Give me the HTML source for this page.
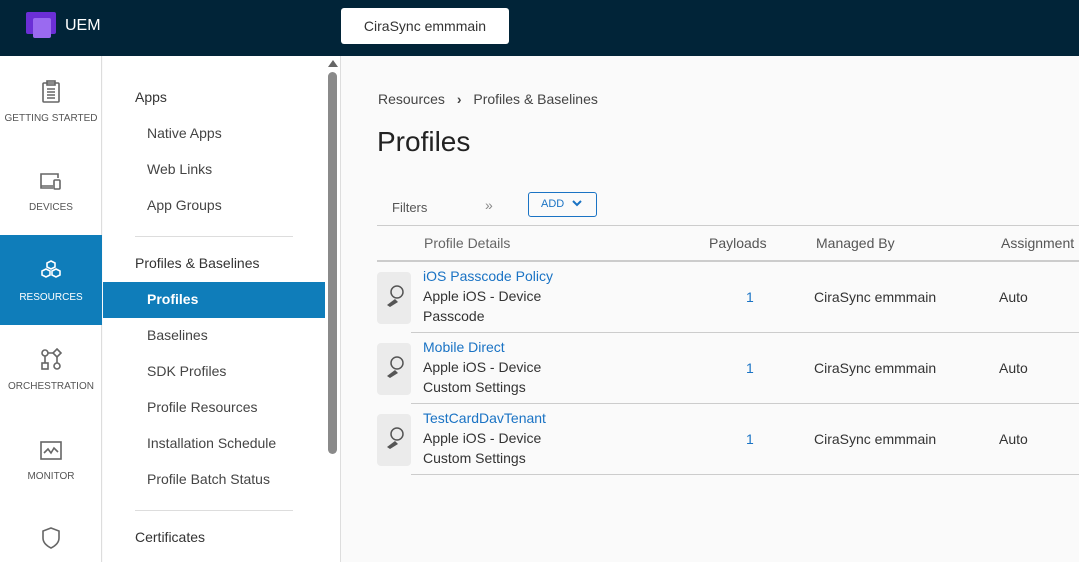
<!DOCTYPE html>
<html><head><meta charset="utf-8"><style>
*{margin:0;padding:0;box-sizing:border-box}
html,body{width:1079px;height:562px;overflow:hidden}
body{font-family:"Liberation Sans",sans-serif;background:#fafafa;position:relative;color:#333}
.top{position:absolute;left:0;top:0;width:1079px;height:56px;background:#012438}
.logo{position:absolute;left:26px;top:12px;width:30px;height:28px}
.uem{position:absolute;left:65px;top:17px;color:#fff;font-size:16px}
.org{position:absolute;left:341px;top:8px;width:168px;height:36px;background:#fff;border-radius:3px;font-size:14px;line-height:36px;text-align:center;color:#333}
.nav{position:absolute;left:0;top:56px;width:102px;height:506px;background:#fff;border-right:1px solid #ddd}
.ni{position:absolute;left:0;width:102px;text-align:center;font-size:10px;color:#555}
.ni svg{display:block;margin:0 auto 9px}
.sub{position:absolute;left:103px;top:56px;width:238px;height:506px;background:#fff;border-right:1px solid #ddd}
.s{position:absolute;font-size:14px;color:#444}
.h{left:32px;font-size:14px;color:#333}
.i{left:44px}
.sel{position:absolute;left:0;top:226px;width:222px;height:36px;background:#0f7dba}
.hr{position:absolute;left:32px;width:158px;height:1px;background:#ddd}
.sb{position:absolute;left:225px;top:16px;width:9px;height:382px;background:#8a8a8a;border-radius:5px}
.main{position:absolute;left:341px;top:56px;width:738px;height:506px;background:#fafafa}
.t{position:absolute;font-size:14px}
.link{color:#1a73c4}
.line{position:absolute;height:1px;background:#ccc}
.ic{position:absolute;left:36px;width:34px;height:52px;background:#ebebeb;border-radius:4px}
</style></head><body>
<div class="top">
<svg class="logo" viewBox="0 0 30 28"><rect x="0" y="0" width="30" height="22" rx="2" fill="#6b2fd6"/><rect x="7" y="6" width="18" height="20" rx="2" fill="#9a6af0"/></svg>
<div class="uem">UEM</div>
<div class="org">CiraSync emmmain</div>
</div>
<div class="nav">
<div class="ni" style="top:24px"><svg width="22" height="24" viewBox="0 0 22 24" fill="none" stroke="#666" stroke-width="1.6"><rect x="3" y="3" width="16" height="19" rx="1"/><rect x="7" y="1" width="8" height="4"/><path d="M7 9h8M7 12h8M7 15h8M7 18h8"/></svg>GETTING STARTED</div>
<div class="ni" style="top:115px"><svg width="24" height="22" viewBox="0 0 24 22" fill="none" stroke="#666" stroke-width="1.6"><path d="M14 15H2V3h17v4M2 15v2h12"/><rect x="15" y="9" width="6" height="9" rx="1"/></svg>DEVICES</div>
<div style="position:absolute;left:0;top:179px;width:102px;height:90px;background:#0f7dba"></div>
<div class="ni" style="top:203px;color:#fff"><svg width="24" height="24" viewBox="0 0 24 24" fill="none" stroke="#fff" stroke-width="1.6"><path d="M12 2l4 2v4l-4 2-4-2V4z"/><path d="M7 10l4 2v4l-4 2-4-2v-4zM17 10l4 2v4l-4 2-4-2v-4z"/></svg>RESOURCES</div>
<div class="ni" style="top:292px"><svg width="24" height="24" viewBox="0 0 24 24" fill="none" stroke="#666" stroke-width="1.6"><circle cx="6" cy="5" r="3"/><path d="M18 1l4 4-4 4-4-4z"/><rect x="3" y="15" width="6" height="6"/><circle cx="18" cy="18" r="3"/><path d="M9 5h5M6 8v7M18 9v6"/></svg>ORCHESTRATION</div>
<div class="ni" style="top:384px"><svg width="24" height="22" viewBox="0 0 24 22" fill="none" stroke="#666" stroke-width="1.6"><rect x="2" y="2" width="20" height="17"/><path d="M5 13l4-4 3 4 3-5 4 4"/></svg>MONITOR</div>
<div class="ni" style="top:470px"><svg width="24" height="24" viewBox="0 0 24 24" fill="none" stroke="#666" stroke-width="1.6"><path d="M12 2l8 3v7c0 5-4 8-8 10-4-2-8-5-8-10V5z"/></svg><span style="position:relative;top:4px">SECURITY</span></div>
</div>
<div class="sub">
<div class="sel"></div>
<div class="s h" style="top:33px">Apps</div>
<div class="s i" style="top:69px">Native Apps</div>
<div class="s i" style="top:105px">Web Links</div>
<div class="s i" style="top:141px">App Groups</div>
<div class="hr" style="top:180px"></div>
<div class="s h" style="top:199px">Profiles &amp; Baselines</div>
<div class="s i" style="top:235px;color:#fff;font-weight:bold">Profiles</div>
<div class="s i" style="top:271px">Baselines</div>
<div class="s i" style="top:307px">SDK Profiles</div>
<div class="s i" style="top:343px">Profile Resources</div>
<div class="s i" style="top:379px">Installation Schedule</div>
<div class="s i" style="top:415px">Profile Batch Status</div>
<div class="hr" style="top:454px"></div>
<div class="s h" style="top:473px">Certificates</div>
<div style="position:absolute;left:225px;top:4px;width:0;height:0;border-left:5px solid transparent;border-right:5px solid transparent;border-bottom:7px solid #666"></div>
<div class="sb"></div>
</div>
<div class="main">
<div class="t" style="left:37px;top:35px;color:#444">Resources <span style="margin:0 8px;font-weight:bold">›</span> Profiles &amp; Baselines</div>
<div style="position:absolute;left:36px;top:70px;font-size:28px;color:#222">Profiles</div>
<div class="t" style="left:51px;top:144px;font-size:13px;color:#555">Filters</div>
<div class="t" style="left:144px;top:141px;color:#888">»</div>
<div style="position:absolute;left:187px;top:136px;width:69px;height:25px;border:1px solid #1a73c4;border-radius:3px;color:#1a73c4;font-size:11px;line-height:23px;padding-left:12px">ADD <svg width="10" height="8" viewBox="0 0 10 8" style="margin-left:5px"><path d="M1 2l4 4 4-4" fill="none" stroke="#1a73c4" stroke-width="2"/></svg></div>
<div class="line" style="left:36px;top:169px;width:702px"></div>
<div class="t" style="left:83px;top:179px;color:#666">Profile Details</div>
<div class="t" style="left:368px;top:179px;color:#555">Payloads</div>
<div class="t" style="left:475px;top:179px;color:#555">Managed By</div>
<div class="t" style="left:660px;top:179px;color:#555">Assignment</div>
<div class="line" style="left:36px;top:204px;width:702px;height:2px;background:#ccc"></div>

<div class="ic" style="top:216px"><svg width="34" height="52"><circle cx="20" cy="20" r="6" fill="none" stroke="#555" stroke-width="1.5"/><path d="M10 33l8-6 3 3-8 5z" fill="#555"/></svg></div>
<div class="t link" style="left:82px;top:212px">iOS Passcode Policy</div>
<div class="t" style="left:82px;top:232px">Apple iOS - Device</div>
<div class="t" style="left:82px;top:252px">Passcode</div>
<div class="t link" style="left:405px;top:233px">1</div>
<div class="t" style="left:473px;top:233px">CiraSync emmmain</div>
<div class="t" style="left:658px;top:233px">Auto</div>
<div class="line" style="left:70px;top:276px;width:668px"></div>

<div class="ic" style="top:287px"><svg width="34" height="52"><circle cx="20" cy="20" r="6" fill="none" stroke="#555" stroke-width="1.5"/><path d="M10 33l8-6 3 3-8 5z" fill="#555"/></svg></div>
<div class="t link" style="left:82px;top:283px">Mobile Direct</div>
<div class="t" style="left:82px;top:303px">Apple iOS - Device</div>
<div class="t" style="left:82px;top:323px">Custom Settings</div>
<div class="t link" style="left:405px;top:304px">1</div>
<div class="t" style="left:473px;top:304px">CiraSync emmmain</div>
<div class="t" style="left:658px;top:304px">Auto</div>
<div class="line" style="left:70px;top:347px;width:668px"></div>

<div class="ic" style="top:358px"><svg width="34" height="52"><circle cx="20" cy="20" r="6" fill="none" stroke="#555" stroke-width="1.5"/><path d="M10 33l8-6 3 3-8 5z" fill="#555"/></svg></div>
<div class="t link" style="left:82px;top:354px">TestCardDavTenant</div>
<div class="t" style="left:82px;top:374px">Apple iOS - Device</div>
<div class="t" style="left:82px;top:394px">Custom Settings</div>
<div class="t link" style="left:405px;top:375px">1</div>
<div class="t" style="left:473px;top:375px">CiraSync emmmain</div>
<div class="t" style="left:658px;top:375px">Auto</div>
<div class="line" style="left:70px;top:418px;width:668px"></div>
</div>
</body></html>
